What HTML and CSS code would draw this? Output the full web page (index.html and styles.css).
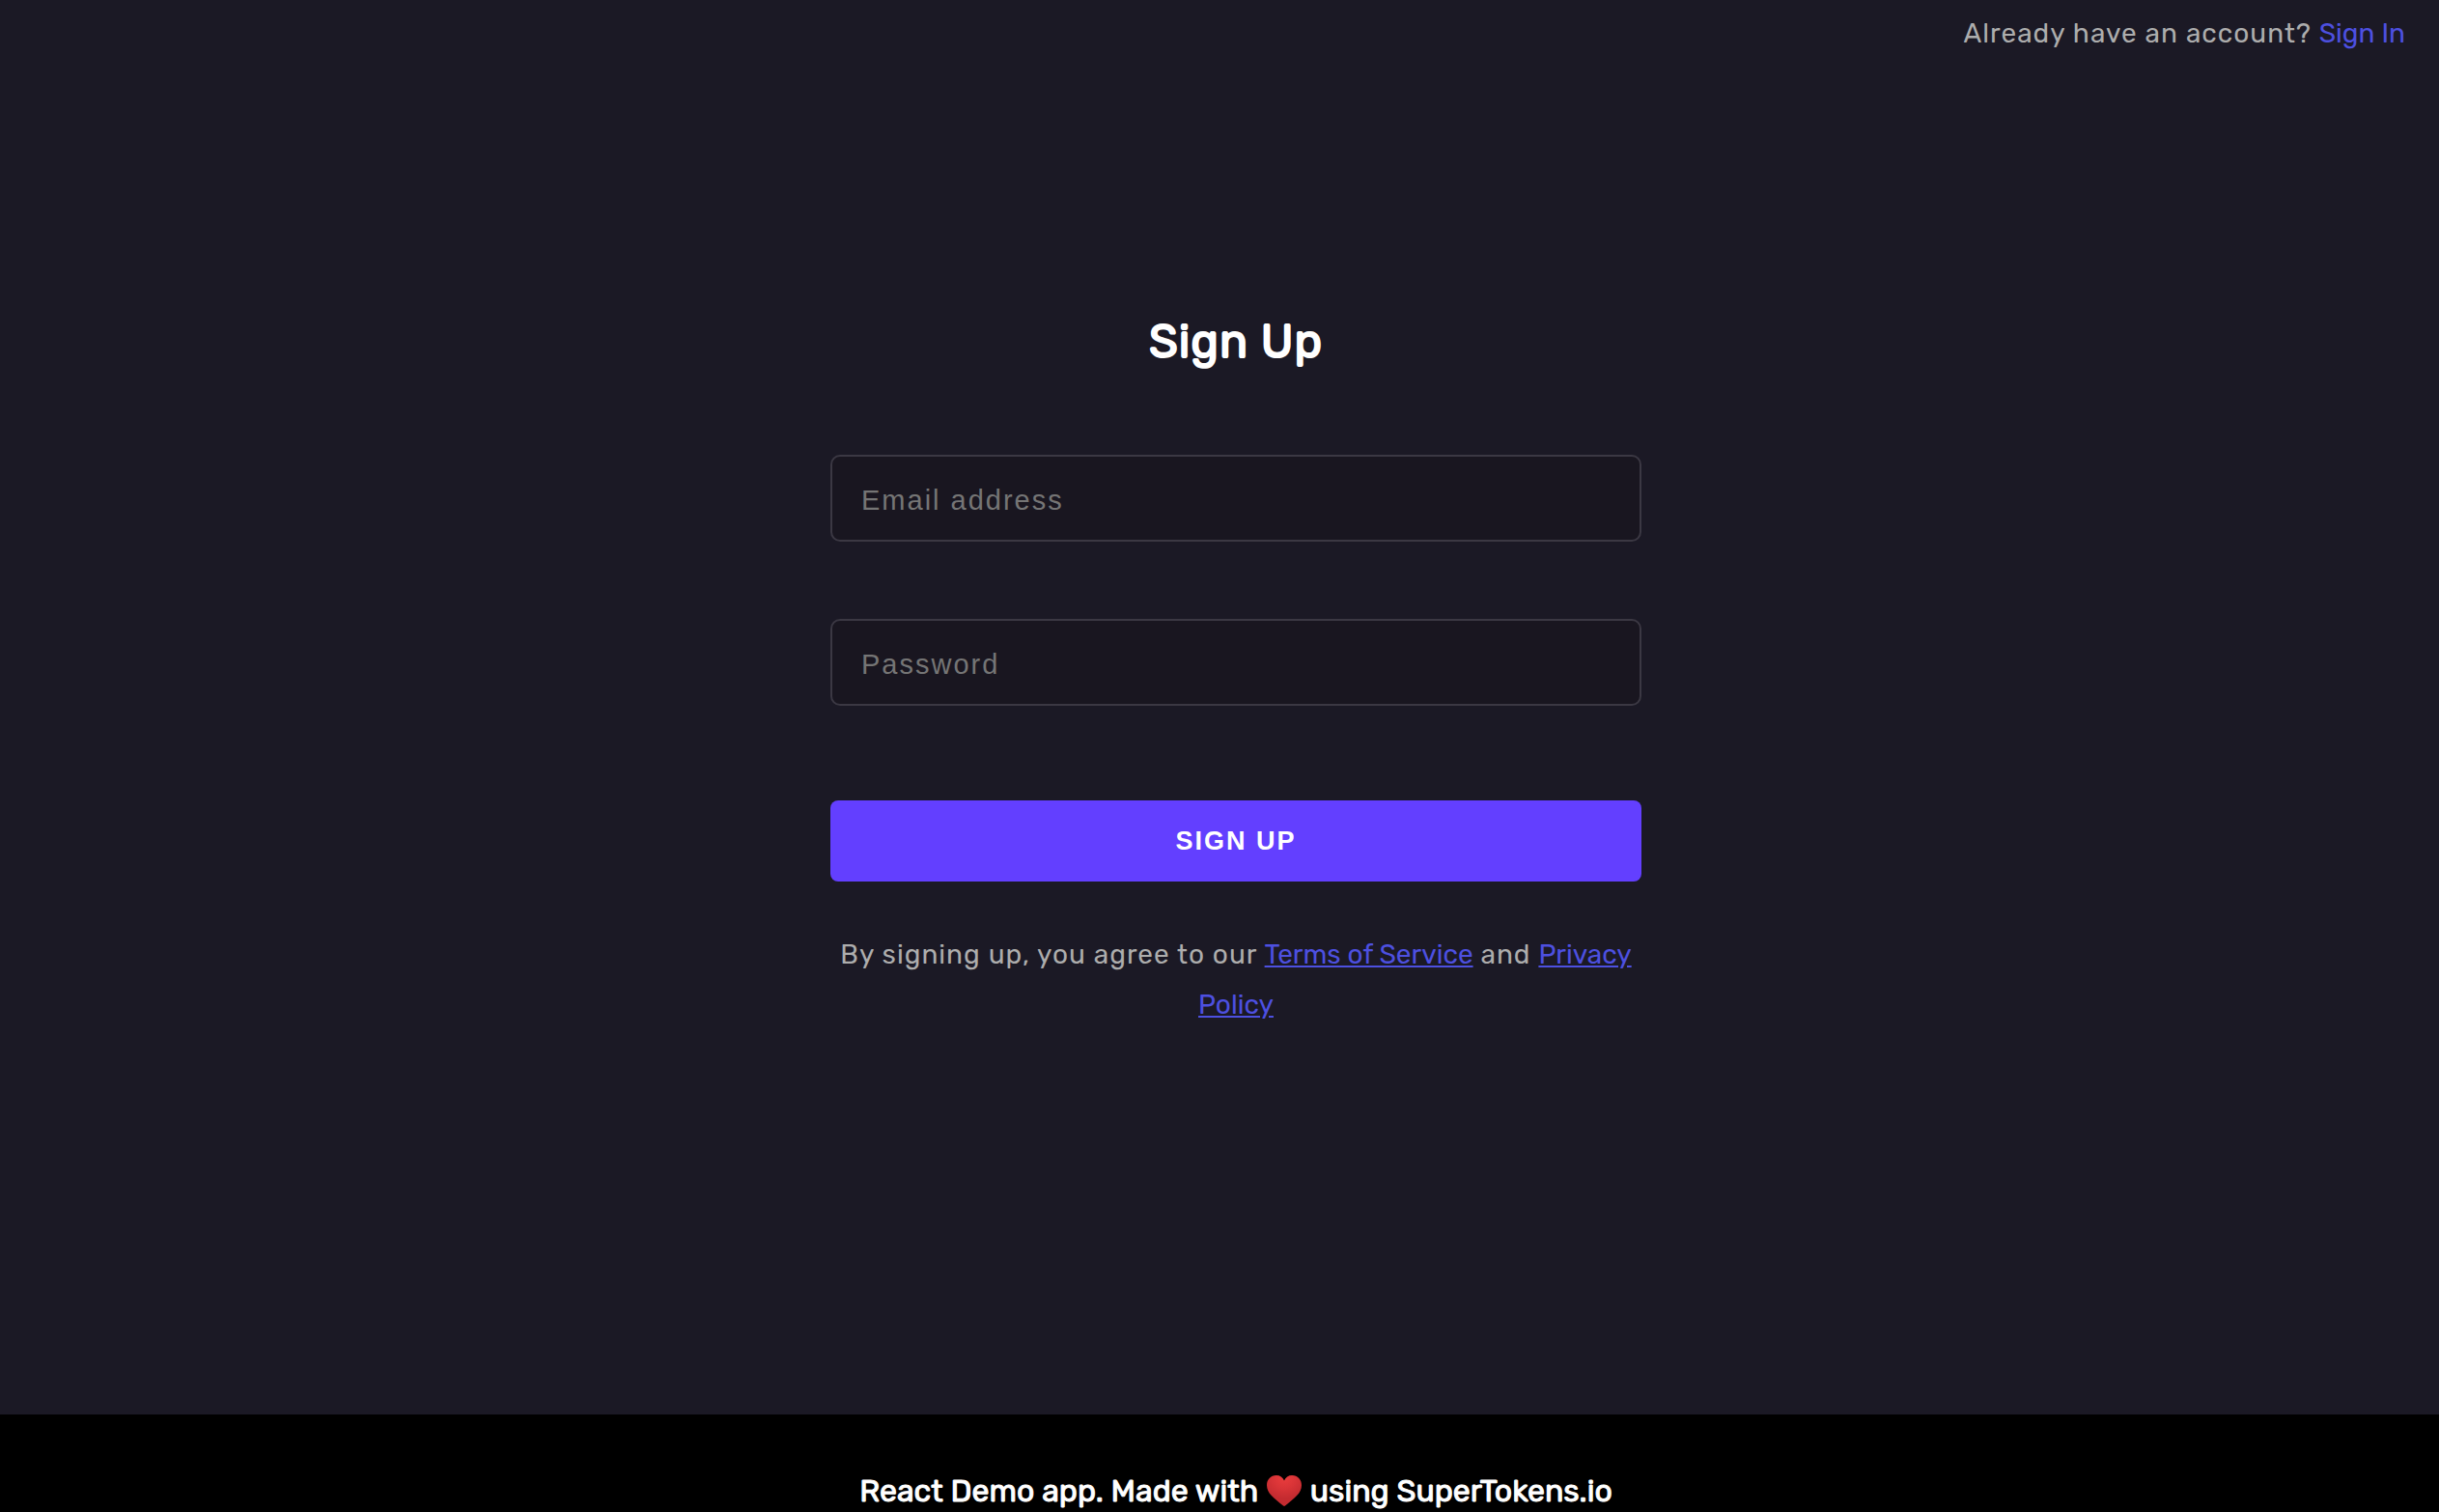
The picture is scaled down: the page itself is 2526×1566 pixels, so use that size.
FILE: index.html
```html
<!DOCTYPE html>
<html lang="en">
<head>
<meta charset="utf-8">
<meta name="viewport" content="width=device-width, initial-scale=1">
<title>Sign Up</title>
<link rel="stylesheet" href="styles.css">
</head>
<body>
<div class="page">
  <header class="topbar">
    <p class="topbar-text">Already have an account? <a class="link" href="#signin">Sign In</a></p>
  </header>
  <main class="main">
    <form class="form">
      <h1 class="title">Sign Up</h1>
      <input class="field" type="email" placeholder="Email address" aria-label="Email address">
      <input class="field" type="password" placeholder="Password" aria-label="Password">
      <button class="submit" type="submit">SIGN UP</button>
      <p class="terms">By signing up, you agree to our <a class="link underlined" href="#terms">Terms of Service</a> and <a class="link underlined" href="#privacy">Privacy Policy</a></p>
    </form>
  </main>
  <footer class="footer">
    <p class="credit">React Demo app. Made with
      <svg class="heart" viewBox="0 0 36 32" role="img" aria-label="love">
        <defs>
          <radialGradient id="shade" cx="50%" cy="10%" r="65%">
            <stop offset="0" stop-color="#e93c3c"/>
            <stop offset=".5" stop-color="#d93437"/>
            <stop offset="1" stop-color="#c42b30"/>
          </radialGradient>
        </defs>
        <path fill="url(#shade)" d="M18 5.500C16.600 2 13.700 0 9.800 0 4.100 0 0 4.300 0 10.200 0 18.800 7.500 23.500 17 31.500Q18 32.400 19 31.500C28.500 23.500 36 18.800 36 10.200 36 4.300 31.900 0 26.200 0 22.300 0 19.400 2 18 5.500Z"/>
      </svg>
      using SuperTokens.io</p>
  </footer>
</div>
</body>
</html>
```
FILE: styles.css
```css
* {
  box-sizing: border-box;
}

body {
  margin: 0;
  background: #1b1925;
  color: #adadad;
  font-family: Rubik, Roboto, sans-serif;
  font-size: 28px;
  letter-spacing: 1px;
}

h1,
p {
  margin: 0;
}

.page {
  display: flex;
  flex-direction: column;
  min-height: 100vh;
}

.topbar {
  padding: 9px 35px 0;
  text-align: right;
}

.topbar-text,
.terms {
  line-height: 52px;
}

.main {
  flex: 1;
  padding: 259px 0 0 34px;
}

.form {
  display: flex;
  flex-direction: column;
  max-width: 840px;
  margin: 0 auto;
}

.title {
  margin-bottom: 83px;
  color: #fff;
  font-size: 48px;
  font-weight: 400;
  line-height: 68px;
  text-align: center;
  -webkit-text-stroke: 2px #fff;
}

.field {
  width: 100%;
  height: 90px;
  margin-bottom: 80px;
  padding: 4px 30px 0;
  border: 2px solid #3b3843;
  border-radius: 10px;
  background: #191620;
  color: #fff;
  font-family: "Liberation Sans", Arial, sans-serif;
  font-size: 29px;
  letter-spacing: 2px;
}

.field::placeholder {
  color: #757575;
}

.submit {
  height: 84px;
  margin: 18px 0 50px;
  border: 0;
  border-radius: 8px;
  background: #633fff;
  color: #fff;
  font-family: "Liberation Sans", Arial, sans-serif;
  font-size: 27px;
  font-weight: 700;
  letter-spacing: 2px;
}

.terms {
  text-align: center;
}

.link {
  color: #4d50e0;
  letter-spacing: 0;
  text-decoration: none;
}

.underlined {
  text-decoration: underline;
}

.footer {
  padding: 58px 0 0 34px;
  background: #000;
  color: #fff;
}

.credit {
  font-size: 32px;
  font-weight: 400;
  letter-spacing: 0;
  line-height: 43px;
  text-align: center;
  -webkit-text-stroke: 1px #fff;
}

.heart {
  width: 36px;
  height: 32px;
  margin: 0 1px;
  vertical-align: -5px;
}
```
